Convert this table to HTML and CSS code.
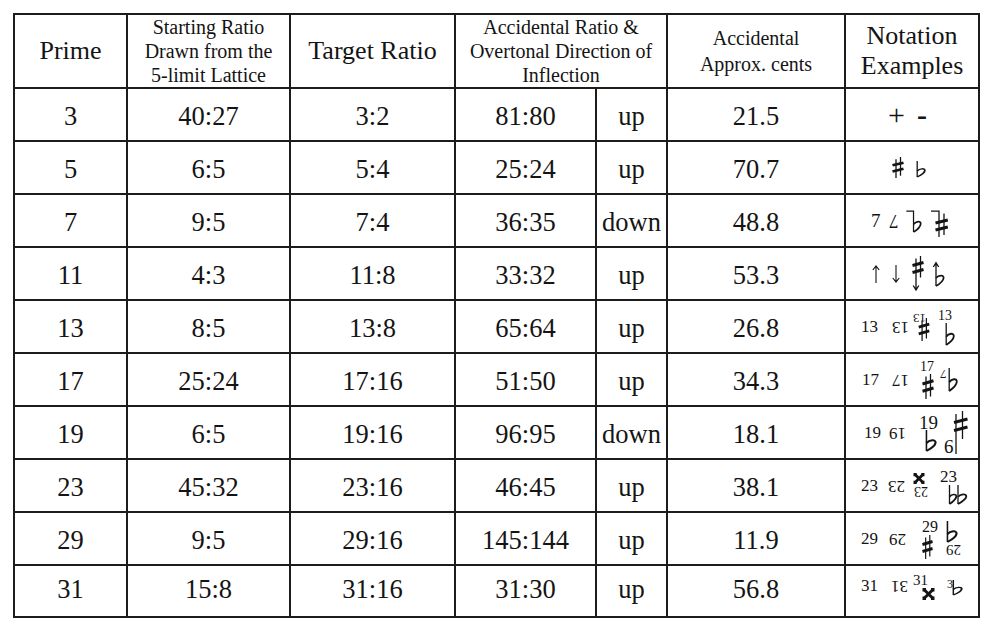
FILE: index.html
```html
<!DOCTYPE html>
<html lang="en">
<head>
<meta charset="utf-8">
<title>Accidentals</title>
<link rel="stylesheet" href="styles.css">
</head>
<body>
<table class="grid">
  <colgroup>
    <col class="c-prime"><col class="c-start"><col class="c-target"><col class="c-ratio"><col class="c-dir"><col class="c-cents"><col class="c-nota">
  </colgroup>
  <thead>
    <tr class="head">
      <th class="big">Prime</th>
      <th class="small">Starting Ratio<br>Drawn from the<br>5-limit Lattice</th>
      <th class="big">Target Ratio</th>
      <th class="small" colspan="2">Accidental Ratio &amp;<br>Overtonal Direction of<br>Inflection</th>
      <th class="small two">Accidental<br>Approx. cents</th>
      <th class="big">Notation<br>Examples</th>
    </tr>
  </thead>
  <tbody>
    <tr>
      <td>3</td><td>40:27</td><td>3:2</td><td>81:80</td><td>up</td><td>21.5</td>
      <td class="nt"><div class="nota"><span class="sym m42">+</span><span class="sym dash m12">-</span></div></td>
    </tr>
    <tr>
      <td>5</td><td>6:5</td><td>5:4</td><td>25:24</td><td>up</td><td>70.7</td>
      <td class="nt"><div class="nota">
        <svg class="m46" width="12" height="21" viewBox="0 0 12 24" preserveAspectRatio="none"><path class="thin" d="M4 2.5V24M8.5 0V21.5"/><path class="bar" d="M0.5 9.5L11.5 6.5M0.5 16.5L11.5 13.5"/></svg>
        <svg class="m12 dn2" width="10" height="16" viewBox="0 0 10 20" preserveAspectRatio="none"><path class="thin" d="M1.2 0V20"/><path class="bowl" d="M1.2 12.5C3.5 9.5 9 8.5 8.8 12C8.6 15 4.5 18 1.2 20"/></svg>
      </div></td>
    </tr>
    <tr>
      <td>7</td><td>9:5</td><td>7:4</td><td>36:35</td><td>down</td><td>48.8</td>
      <td class="nt"><div class="nota">
        <span class="num n19 m25">7</span><span class="num n19 rot m8">7</span>
        <svg class="m8" width="16" height="22" viewBox="0 0 16 23"><path class="thin" d="M0 1.2H8M7.5 0.5V23"/><path class="bowl" d="M7.5 15C10 11.5 15.5 11 15 14.5C14.6 17.5 11 21 7.5 23"/></svg>
        <svg class="m9 up4" width="17" height="27" viewBox="0 0 17 27"><path class="thin" d="M0 1.2H8.5M8 0.5V27M13 3.5V25"/><path class="bar" d="M4.5 13L16.8 10M4.5 20L16.8 17"/></svg>
      </div></td>
    </tr>
    <tr>
      <td>11</td><td>4:3</td><td>11:8</td><td>33:32</td><td>up</td><td>53.3</td>
      <td class="nt"><div class="nota">
        <svg class="m26" width="8" height="18" viewBox="0 0 8 18"><path class="arr" d="M4 1V18M0.8 5L4 0.8L7.2 5"/></svg>
        <svg class="m12" width="8" height="18" viewBox="0 0 8 18"><path class="arr" d="M4 0V17M0.8 13L4 17.2L7.2 13"/></svg>
        <svg class="m12" width="12" height="35" viewBox="0 0 12 35"><path class="thin" d="M4 2.5V34M8.5 0V21.5M1.2 29.5L4 34L6.8 29.5"/><path class="bar" d="M0.5 9.5L11.5 6.5M0.5 16.5L11.5 13.5"/></svg>
        <svg class="m9" width="12" height="24" viewBox="0 0 12 24"><path class="thin" d="M3 1V24M0.3 5L3 0.8L5.7 5"/><path class="bowl" d="M3 16C5.5 13 11 12.5 10.6 16C10.3 19 6.5 22 3 24"/></svg>
      </div></td>
    </tr>
    <tr>
      <td>13</td><td>8:5</td><td>13:8</td><td>65:64</td><td>up</td><td>26.8</td>
      <td class="nt"><div class="nota">
        <span class="num m15">13</span><span class="num rot m14">13</span>
        <span class="stack m4"><span class="lab l13 rot">13</span><svg class="m5 ov7" width="12" height="23" viewBox="0 0 12 24"><path class="thin" d="M4 2.5V24M8.5 0V21.5"/><path class="bar" d="M0.5 9.5L11.5 6.5M0.5 16.5L11.5 13.5"/></svg></span>
        <span class="stack m8"><span class="lab l14">13</span><svg class="m7" width="10" height="22" viewBox="0 0 10 20" preserveAspectRatio="none"><path class="thin" d="M1.2 0V20"/><path class="bowl" d="M1.2 12.5C3.5 9.5 9 8.5 8.8 12C8.6 15 4.5 18 1.2 20"/></svg></span>
      </div></td>
    </tr>
    <tr>
      <td>17</td><td>25:24</td><td>17:16</td><td>51:50</td><td>up</td><td>34.3</td>
      <td class="nt"><div class="nota">
        <span class="num m16">17</span><span class="num rot m13">17</span>
        <span class="stack m11"><span class="lab l14">17</span><svg class="m2" width="12" height="25" viewBox="0 0 12 24" preserveAspectRatio="none"><path class="thin" d="M4 2.5V24M8.5 0V21.5"/><path class="bar" d="M0.5 9.5L11.5 6.5M0.5 16.5L11.5 13.5"/></svg></span>
        <span class="pair m6"><span class="lab l13 rot">7</span><svg class="m1" width="10" height="23" viewBox="0 0 10 20" preserveAspectRatio="none"><path class="thin" d="M1.2 0V20"/><path class="bowl" d="M1.2 12.5C3.5 9.5 9 8.5 8.8 12C8.6 15 4.5 18 1.2 20"/></svg></span>
      </div></td>
    </tr>
    <tr>
      <td>19</td><td>6:5</td><td>19:16</td><td>96:95</td><td>down</td><td>18.1</td>
      <td class="nt"><div class="nota">
        <span class="num m18">19</span><span class="num rot m8">19</span>
        <span class="stack m13"><span class="lab l19">19</span><svg class="m6" width="12" height="21" viewBox="0 0 10 20" preserveAspectRatio="none"><path class="thin" d="M1.2 0V20"/><path class="bowl" d="M1.2 12.5C3.5 9.5 9 8.5 8.8 12C8.6 15 4.5 18 1.2 20"/></svg></span>
        <span class="pair end m6"><span class="lab l19 rot">9</span><svg width="14" height="43" viewBox="0 0 14 43"><path class="thin" d="M2 3V43M8.5 0V28"/><path class="bar" d="M0 11.5L13.5 8M0 19.5L13.5 16"/></svg></span>
      </div></td>
    </tr>
    <tr>
      <td>23</td><td>45:32</td><td>23:16</td><td>46:45</td><td>up</td><td>38.1</td>
      <td class="nt"><div class="nota">
        <span class="num m15">23</span><span class="num rot m10">23</span>
        <span class="stack m8"><svg width="12" height="11" viewBox="0 0 12 12"><path class="bar" d="M2 2L10 10M10 2L2 10"/><path class="dot" d="M0 0h3.5v3.5h-3.5zM8.5 0h3.5v3.5h-3.5zM0 8.5h3.5v3.5h-3.5zM8.5 8.5h3.5v3.5h-3.5z"/></svg><span class="lab l14 rot m1">23</span></span>
        <span class="stack m12"><span class="lab l17">23</span><svg class="m8" width="20" height="19" viewBox="0 0 20 20" preserveAspectRatio="none"><path class="thin" d="M1.5 0V20M10 0V20"/><path class="bowl" d="M1.5 12.5C3.5 9.5 8.5 9 8.3 12C8.1 15 4.5 18 1.5 20M10 12.5C12 9.5 18.5 8.5 18.3 12C18.1 15 13.5 18 10 20"/></svg></span>
      </div></td>
    </tr>
    <tr>
      <td>29</td><td>9:5</td><td>29:16</td><td>145:144</td><td>up</td><td>11.9</td>
      <td class="nt"><div class="nota">
        <span class="num m15">29</span><span class="num rot m11">29</span>
        <span class="stack m16"><span class="lab l16">29</span><svg width="11" height="24" viewBox="0 0 12 24" preserveAspectRatio="none"><path class="thin" d="M4 2.5V24M8.5 0V21.5"/><path class="bar" d="M0.5 9.5L11.5 6.5M0.5 16.5L11.5 13.5"/></svg></span>
        <span class="stack m8"><svg width="12" height="21" viewBox="0 0 10 20" preserveAspectRatio="none"><path class="thin" d="M1.2 0V20"/><path class="bowl" d="M1.2 12.5C3.5 9.5 9 8.5 8.8 12C8.6 15 4.5 18 1.2 20"/></svg><span class="lab l15 rot">29</span></span>
      </div></td>
    </tr>
    <tr class="last">
      <td>31</td><td>15:8</td><td>31:16</td><td>31:30</td><td>up</td><td>56.8</td>
      <td class="nt"><div class="nota">
        <span class="num m15">31</span><span class="num rot m13">31</span>
        <span class="stack m5"><span class="lab l15">31</span><svg class="m9" width="13" height="12" viewBox="0 0 12 12"><path class="bar" d="M2 2L10 10M10 2L2 10"/><path class="dot" d="M0 0h3.5v3.5h-3.5zM8.5 0h3.5v3.5h-3.5zM0 8.5h3.5v3.5h-3.5zM8.5 8.5h3.5v3.5h-3.5z"/></svg></span>
        <span class="pair m12"><span class="lab l12">3</span><svg class="mneg1 dn2" width="11" height="15" viewBox="0 0 10 20" preserveAspectRatio="none"><path class="thin" d="M1.2 0V20"/><path class="bowl" d="M1.2 12.5C3.5 9.5 9 8.5 8.8 12C8.6 15 4.5 18 1.2 20"/></svg></span>
      </div></td>
    </tr>
  </tbody>
</table>
</body>
</html>
```
FILE: styles.css
```css
html, body {
  margin: 0;
  background: #ffffff;
}

body {
  font-family: "Liberation Serif", "Times New Roman", serif;
  color: #141414;
}

.grid {
  border-collapse: collapse;
  table-layout: fixed;
  width: 967px;
  margin: 13px 0 0 13px;
  font-family: "Liberation Serif", "Times New Roman", serif;
}

.c-prime { width: 113px; }
.c-start { width: 163px; }
.c-target { width: 165px; }
.c-ratio { width: 141px; }
.c-dir { width: 71px; }
.c-cents { width: 178px; }
.c-nota { width: 134px; }

.grid th,
.grid td {
  border: 2px solid #1c1c1c;
  padding: 0;
  text-align: center;
  vertical-align: middle;
}

.grid th {
  font-weight: normal;
}

.head {
  height: 73px;
}

.grid tbody tr {
  height: 53px;
}

.grid tbody tr.last {
  height: 52px;
}

.big {
  font-size: 26px;
  line-height: 30px;
}

.small {
  font-size: 20px;
  line-height: 24px;
}

.small.two {
  line-height: 26px;
}

.grid td {
  font-size: 26.5px;
  line-height: 30px;
  padding-top: 3px;
}

.grid tr.last td {
  padding-top: 0;
  padding-bottom: 4px;
}

.grid td.nt {
  text-align: left;
  padding-top: 0;
}

.grid tr.last td.nt {
  padding-bottom: 10px;
}

.nota {
  display: flex;
  align-items: center;
}

.nota svg {
  display: block;
  flex: none;
  overflow: visible;
}

.nota .thin {
  stroke: #141414;
  stroke-width: 1.3;
  fill: none;
}

.nota .bar {
  stroke: #141414;
  stroke-width: 3;
  fill: none;
}

.nota .bowl {
  stroke: #141414;
  stroke-width: 1.8;
  fill: none;
}

.nota .arr {
  stroke: #141414;
  stroke-width: 1.1;
  fill: none;
}

.nota .dot {
  fill: #141414;
}

.sym {
  font-size: 30px;
  line-height: 30px;
}

.dash {
  font-weight: bold;
}

.num {
  display: inline-block;
  font-size: 17px;
  line-height: 18px;
}

.n19 {
  font-size: 19px;
}

.rot {
  display: inline-block;
  transform: rotate(180deg);
}

.stack {
  display: flex;
  flex-direction: column;
  align-items: flex-start;
}

.pair {
  display: flex;
  align-items: flex-start;
}

.pair.end {
  align-items: flex-end;
}

.lab {
  display: block;
  line-height: 1;
}

.l12 { font-size: 12px; }
.l13 { font-size: 13px; }
.l14 { font-size: 14px; }
.l15 { font-size: 15px; }
.l16 { font-size: 16px; }
.l17 { font-size: 17px; }
.l19 { font-size: 19px; line-height: 15px; }

.ov7 { margin-top: -7px; }
.up4 { margin-top: 6px; }
.dn2 { margin-top: 2px; }

.mneg1 { margin-left: -1px; }
.m1 { margin-left: 1px; }
.m2 { margin-left: 2px; }
.m4 { margin-left: 4px; }
.m5 { margin-left: 5px; }
.m6 { margin-left: 6px; }
.m7 { margin-left: 7px; }
.m8 { margin-left: 8px; }
.m9 { margin-left: 9px; }
.m10 { margin-left: 10px; }
.m11 { margin-left: 11px; }
.m12 { margin-left: 12px; }
.m13 { margin-left: 13px; }
.m14 { margin-left: 14px; }
.m15 { margin-left: 15px; }
.m16 { margin-left: 16px; }
.m17 { margin-left: 17px; }
.m18 { margin-left: 18px; }
.m25 { margin-left: 25px; }
.m26 { margin-left: 26px; }
.m42 { margin-left: 42px; }
.m43 { margin-left: 43px; }
.m46 { margin-left: 46px; }
```
